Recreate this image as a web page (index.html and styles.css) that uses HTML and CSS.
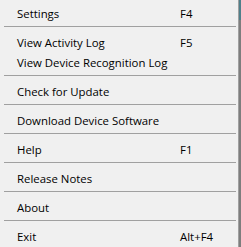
FILE: index.html
```html
<!DOCTYPE html>
<html lang="en">
<head>
    <meta charset="UTF-8">
    <title>Menu</title>
    <link rel="stylesheet" href="styles.css">
</head>
<body>
    <div class="frame">
        <div class="menu">
            <div class="item"><span class="label">Settings</span><span class="key">F4</span></div>
            <div class="sep"></div>
            <div class="item"><span class="label">View Activity Log</span><span class="key">F5</span></div>
            <div class="item"><span class="label">View Device Recognition Log</span></div>
            <div class="sep"></div>
            <div class="item"><span class="label">Check for Update</span></div>
            <div class="sep"></div>
            <div class="item"><span class="label">Download Device Software</span></div>
            <div class="sep"></div>
            <div class="item"><span class="label">Help</span><span class="key">F1</span></div>
            <div class="sep"></div>
            <div class="item"><span class="label">Release Notes</span></div>
            <div class="sep"></div>
            <div class="item"><span class="label">About</span></div>
            <div class="sep"></div>
            <div class="item"><span class="label">Exit</span><span class="key">Alt+F4</span></div>
        </div>
        <div class="edge"></div>
    </div>
</body>
</html>
```
FILE: styles.css
```css
body {
    margin: 0;
    padding: 0;
    background-color: #f0f0f0;
    font-family: "Open Sans", "Noto Sans", Arial, sans-serif;
    font-size: 11.4px;
    color: #000;
}
.frame {
    display: flex;
    width: 241px;
    height: 247px;
    overflow: hidden;
}
.menu {
    flex: 1;
    padding-top: 3px;
    background-color: #f0f0f0;
    border-right: 1px solid #a0a0a0;
}
.item {
    display: flex;
    align-items: center;
    height: 20px;
    padding-left: 17px;
    white-space: nowrap;
}
.label {
    width: 163px;
}
.key {
    flex: 1;
}
.sep {
    height: 1px;
    margin: 3px 2px 5px 4px;
    background-color: #a0a0a0;
}
.edge {
    width: 2px;
    background: linear-gradient(#4f7f8a 0, #4f7f8a 20px, #7d7d7d 20px);
}
```
